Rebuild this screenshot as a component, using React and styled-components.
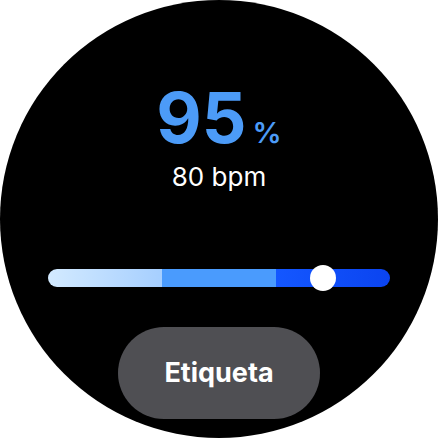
import React from "react";
import styled, { createGlobalStyle } from "styled-components";

const GlobalStyle = createGlobalStyle`
  html, body {
    margin: 0;
    padding: 0;
    background: #ffffff;
  }
  body {
    font-family: Inter, "Noto Sans", sans-serif;
  }
`;

const Watch = styled.div`
  width: 438px;
  height: 438px;
  border-radius: 50%;
  background: #000;
  overflow: hidden;
  display: flex;
  flex-direction: column;
  align-items: center;
  padding-top: 83px;
  box-sizing: border-box;
`;

const Reading = styled.div`
  display: flex;
  align-items: baseline;
  color: #4c9bf7;
  line-height: 1;
`;

const Value = styled.span`
  font-size: 70px;
  font-weight: 700;
`;

const Unit = styled.span`
  font-size: 29px;
  font-weight: 600;
  margin-left: 6px;
`;

const Sub = styled.div`
  color: #fff;
  font-size: 26px;
  line-height: 1;
  margin-top: 11px;
`;

const Track = styled.div`
  position: relative;
  margin-top: 79px;
  width: 343px;
  height: 18px;
  border-radius: 9px;
  display: flex;
`;

const Segment = styled.div`
  flex: 1;
  background: ${({ $bg }) => $bg};
  border-radius: ${({ $r }) => $r};
`;

const Thumb = styled.div`
  position: absolute;
  top: 50%;
  width: 26px;
  height: 26px;
  border-radius: 50%;
  background: #fff;
  transform: translate(-50%, -50%);
`;

const Button = styled.div`
  margin-top: 40px;
  width: 202px;
  height: 92px;
  border-radius: 46px;
  background: #4f4f53;
  color: #fff;
  font-size: 27px;
  font-weight: 700;
  display: flex;
  align-items: center;
  justify-content: center;
  padding-bottom: 2px;
  box-sizing: border-box;
  flex-shrink: 0;
`;

export default function App() {
  const pos = 80.4;
  return (
    <>
      <GlobalStyle />
      <Watch>
        <Reading>
          <Value>95</Value>
          <Unit>%</Unit>
        </Reading>
        <Sub>80 bpm</Sub>
        <Track>
          <Segment $bg="linear-gradient(90deg, #d3eaff, #a6cfff)" $r="9px 0 0 9px" />
          <Segment $bg="#4a9bfd" $r="0" />
          <Segment $bg="linear-gradient(90deg, #1457ff, #0b44f0)" $r="0 9px 9px 0" />
          <Thumb style={{ left: `${pos}%` }} />
        </Track>
        <Button>Etiqueta</Button>
      </Watch>
    </>
  );
}
